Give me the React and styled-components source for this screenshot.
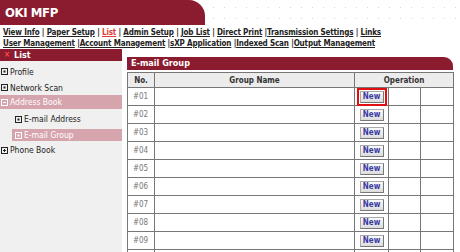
import React from "react";
import styled, { createGlobalStyle } from "styled-components";

const RED = "#8b1c2f";
const PINK = "#d6a4ac";

const Global = createGlobalStyle`
  html, body { margin: 0; padding: 0; background: #fff; }
  body { font-family: "DejaVu Sans Condensed", "DejaVu Sans", Verdana, sans-serif; color: #222; }
`;

const Page = styled.div`
  width: 460px;
  height: 252px;
  overflow: hidden;
  display: flex;
  flex-direction: column;
`;

const Header = styled.div`
  display: flex;
  height: 25px;
`;

const Brand = styled.div`
  width: 205px;
  background: ${RED};
  border-top-right-radius: 16px;
  color: #fff;
  font-weight: bold;
  font-size: 13px;
  line-height: 25px;
  padding-left: 5px;
  box-sizing: border-box;
  letter-spacing: -0.4px;
`;

const Dots = styled.div`
  flex: 1;
  background-image: radial-gradient(circle, #d8d8d8 0.8px, transparent 1px);
  background-size: 11px 11px;
  background-position: 3px 2px;
`;

const Nav = styled.nav`
  padding: 2px 3px 0;
  height: 22px;
  font-size: 8px;
  font-weight: bold;
  line-height: 11px;
  letter-spacing: -0.15px;
  white-space: nowrap;
`;

const NavLink = styled.a`
  color: ${(p) => (p.$active ? "#e23a3a" : "#222")};
  text-decoration: underline;
`;

const Body = styled.div`
  display: flex;
  flex: 1;
  min-height: 0;
`;

const Sidebar = styled.aside`
  width: 122px;
  background: #f0f0f0;
  display: flex;
  flex-direction: column;
`;

const SideHead = styled.div`
  background: ${RED};
  color: #fff;
  font-weight: bold;
  font-size: 9px;
  height: 12px;
  line-height: 12px;
  padding-left: 4px;
  display: flex;
  align-items: center;
  gap: 4px;
`;

const Xmark = styled.span`
  color: #ff4a4a;
  font-size: 8px;
  font-weight: bold;
`;

const SideItem = styled.div`
  display: flex;
  align-items: center;
  gap: 2px;
  height: ${(p) => p.$h || 15}px;
  margin-left: ${(p) => (p.$indent ? 12 : 0)}px;
  padding-left: ${(p) => (p.$indent ? 3 : 1)}px;
  background: ${(p) => (p.$sel ? PINK : "transparent")};
  color: ${(p) => (p.$sel ? "#fff" : "#222")};
  font-size: 8.5px;
`;

const Main = styled.main`
  margin-left: 5px;
  width: 326px;
  padding-top: 8px;
`;

const Section = styled.div`
  background: ${RED};
  color: #fff;
  font-weight: bold;
  font-size: 9px;
  height: 13px;
  line-height: 13px;
  padding-left: 4px;
  border-top-right-radius: 9px;
  margin-bottom: 2px;
`;

const Table = styled.table`
  border-collapse: collapse;
  width: 326px;
  table-layout: fixed;
  font-size: 8px;
`;

const Th = styled.th`
  border: 1px solid #777;
  background: #ececec;
  height: 14px;
  padding: 0;
  color: #333;
  font-weight: bold;
  text-align: center;
`;

const Td = styled.td`
  border: 1px solid #777;
  height: 17px;
  padding: 0 0 0 ${(p) => p.$pl || 0}px;
  color: #777;
  text-align: ${(p) => p.$align || "left"};
`;

const NewBtn = styled.button`
  width: 24px;
  height: 12px;
  padding: 0;
  font-family: inherit;
  font-size: 8px;
  font-weight: bold;
  color: #3a3aa0;
  background: linear-gradient(#fafafa, #dcdcdc);
  border: 1px solid #aaa;
  border-right-color: #777;
  border-bottom-color: #777;
  display: block;
  margin: 0 auto;
  outline: ${(p) => (p.$focus ? "2px solid #e01010" : "none")};
  outline-offset: 1px;
`;

const Box = ({ kind }) => (
  <svg width="7" height="7" viewBox="0 0 7 7" style={{ flex: "none" }}>
    <rect x="0.5" y="0.5" width="6" height="6" fill="none" stroke="currentColor" strokeWidth="1" />
    {kind === "leaf" && <rect x="2.5" y="2.5" width="2" height="2" fill="currentColor" />}
    {(kind === "minus" || kind === "plus") && <line x1="2" y1="3.5" x2="5" y2="3.5" stroke="currentColor" />}
    {kind === "plus" && <line x1="3.5" y1="2" x2="3.5" y2="5" stroke="currentColor" />}
  </svg>
);

const line1 = ["View Info", "Paper Setup", "List", "Admin Setup", "Job List", "Direct Print", "|Transmission Settings", "Links"];
const line2 = ["User Management", "|Account Management", "|sXP Application", "|Indexed Scan", "|Output Management"];

function NavLine({ items }) {
  return (
    <div>
      {items.map((t, i) => {
        const noSpace = t.startsWith("|");
        const label = noSpace ? t.slice(1) : t;
        let sep = null;
        if (i > 0) sep = noSpace ? " |" : " | ";
        return (
          <React.Fragment key={i}>
            {sep}
            <NavLink $active={label === "List"}>{label}</NavLink>
          </React.Fragment>
        );
      })}
    </div>
  );
}

export default function App() {
  const rows = Array.from({ length: 10 }, (_, i) => `#${String(i + 1).padStart(2, "0")}`);
  return (
    <Page>
      <Global />
      <Header>
        <Brand>OKI MFP</Brand>
        <Dots />
      </Header>
      <Nav>
        <NavLine items={line1} />
        <NavLine items={line2} />
      </Nav>
      <Body>
        <Sidebar>
          <SideHead><Xmark>×</Xmark>List</SideHead>
          <SideItem $h={17} style={{ paddingTop: 2 }}><Box kind="leaf" />Profile</SideItem>
          <SideItem $h={15}><Box kind="leaf" />Network Scan</SideItem>
          <SideItem $sel $h={14}><Box kind="minus" />Address Book</SideItem>
          <SideItem $indent $h={20}><Box kind="leaf" />E-mail Address</SideItem>
          <SideItem $indent $sel $h={12}><Box kind="leaf" />E-mail Group</SideItem>
          <SideItem $h={18}><Box kind="plus" />Phone Book</SideItem>
        </Sidebar>
        <Main>
          <Section>E-mail Group</Section>
          <Table>
            <colgroup>
              <col style={{ width: 27 }} />
              <col style={{ width: 200 }} />
              <col style={{ width: 34 }} />
              <col style={{ width: 32 }} />
              <col style={{ width: 33 }} />
            </colgroup>
            <thead>
              <tr>
                <Th>No.</Th>
                <Th>Group Name</Th>
                <Th colSpan={3}>Operation</Th>
              </tr>
            </thead>
            <tbody>
              {rows.map((r, i) => (
                <tr key={r}>
                  <Td $pl={5}>{i < 9 ? r : ""}</Td>
                  <Td />
                  <Td $align="center">{i < 9 && <NewBtn $focus={i === 0}>New</NewBtn>}</Td>
                  <Td />
                  <Td />
                </tr>
              ))}
            </tbody>
          </Table>
        </Main>
      </Body>
    </Page>
  );
}
